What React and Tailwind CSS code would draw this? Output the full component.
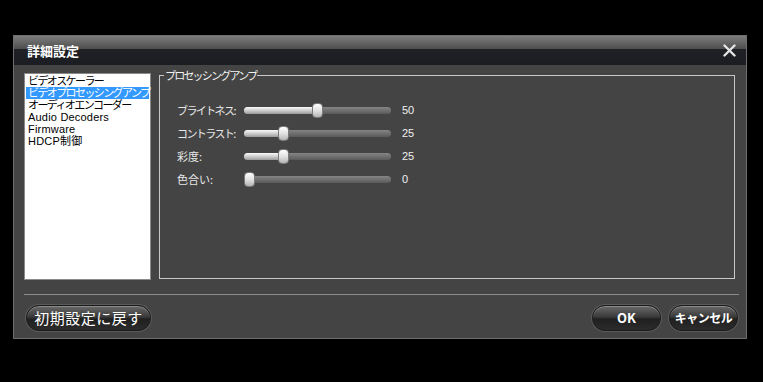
const jp = { fontFamily: '"Noto Sans CJK JP", "Liberation Sans", sans-serif' };

const items = [
  { label: 'ビデオスケーラー', jp: true },
  { label: 'ビデオプロセッシングアンプ', jp: true, selected: true },
  { label: 'オーディオエンコーダー', jp: true },
  { label: 'Audio Decoders' },
  { label: 'Firmware' },
  { label: 'HDCP制御' },
];

const sliders = [
  { label: 'ブライトネス:', value: 50, kana: true },
  { label: 'コントラスト:', value: 25, kana: true },
  { label: '彩度:', value: 25 },
  { label: '色合い:', value: 0 },
];

function Slider({ label, value, kana }) {
  const left = value * 1.36;
  return (
    <div className="flex items-center h-[23px]">
      <div
        className={`w-[67px] text-[11px] text-[#e8e8e8] leading-none whitespace-nowrap ${kana ? 'tracking-[-1.6px]' : 'tracking-[0px]'}`}
        style={jp}
      >
        {label}
      </div>
      <div className="relative w-[147px] h-[7px] rounded-full bg-[linear-gradient(to_bottom,#858585,#5a5a5a)]">
        <div
          className="absolute left-0 top-0 h-[7px] rounded-full bg-[linear-gradient(to_bottom,#fafafa,#c4c4c4_60%,#9a9a9a)]"
          style={{ width: left + 6 }}
        />
        <div
          className="absolute top-[-4px] w-[11px] h-[15px] rounded-[4px] border border-[#7a7a7a] bg-[linear-gradient(to_bottom,#ffffff,#e2e2e2_50%,#b5b5b5)]"
          style={{ left }}
        />
      </div>
      <div className="ml-[11px] text-[11px] text-[#f0f0f0] leading-none" style={{ fontFamily: '"Liberation Sans", sans-serif' }}>
        {value}
      </div>
    </div>
  );
}

function PillButton({ children, className = '', textClass = '' }) {
  return (
    <button
      className={`h-[26px] rounded-full border border-[#1a1a1a] bg-[linear-gradient(to_bottom,#6a6a6a,#3a3a3a_45%,#202020_55%,#2c2c2c)] shadow-[inset_0_1px_0_#8a8a8a,0_0_0_1px_#5a5a5a] text-white flex items-center justify-center ${className}`}
    >
      <span className={textClass} style={jp}>{children}</span>
    </button>
  );
}

export default function App() {
  return (
    <div className="w-[763px] h-[382px] bg-black pt-[35px] pl-[13px]">
      <div className="w-[734px] h-[304px] border border-[#6e6e6e] bg-[#444444] flex flex-col">
        <div className="h-[29px] flex items-center justify-between pl-[13px] pr-[10px] bg-[linear-gradient(to_bottom,#7c7c7c_0px,#4e4e4e_13px,#1f2127_13px,#1b1d23_29px)]">
          <span className="text-[13px] font-bold text-white" style={jp}>詳細設定</span>
          <svg width="13" height="13" viewBox="0 0 13 13">
            <path d="M1.5 1.5 L11.5 11.5 M11.5 1.5 L1.5 11.5" stroke="#e4e4e4" strokeWidth="2.4" strokeLinecap="round" />
          </svg>
        </div>

        <div className="flex pl-[10px] pt-[8px]">
          <div className="w-[127px] h-[207px] bg-white border border-[#8a8a8a] pt-[1px] px-[1px]">
            {items.map((it) => (
              <div
                key={it.label}
                className={`h-[12px] pl-[2px] leading-[12px] text-[11px] whitespace-nowrap ${
                  it.selected ? 'bg-[#3399ff] text-white' : 'text-black'
                } ${it.jp ? 'tracking-[-1.6px]' : 'tracking-[0.2px]'}`}
                style={{ fontFamily: '"Liberation Sans", "Noto Sans CJK JP", sans-serif' }}
              >
                {it.label}
              </div>
            ))}
          </div>

          <div className="relative ml-[8px] mt-[2px] w-[576px] h-[204px] border border-[#c8c8c8] pl-[17px] pt-[23px]">
            <span
              className="absolute left-[4px] top-[-8px] bg-[#444444] px-[1px] text-[11px] leading-[14px] tracking-[-1.8px] text-[#f2f2f2]"
              style={jp}
            >
              プロセッシングアンプ
            </span>
            {sliders.map((s) => (
              <Slider key={s.label} {...s} />
            ))}
          </div>
        </div>

        <div className="ml-[10px] mr-[7px] mt-[14px] h-px bg-[#8c8c8c]" />

        <div className="flex items-center justify-between pl-[12px] pr-[8px] mt-[10px]">
          <PillButton className="w-[125px]" textClass="text-[15px] tracking-[0.5px]">初期設定に戻す</PillButton>
          <div className="flex gap-[8px]">
            <PillButton className="w-[69px]" textClass="text-[13px] font-bold">OK</PillButton>
            <PillButton className="w-[69px]" textClass="text-[12px] tracking-[-0.5px] font-bold">キャンセル</PillButton>
          </div>
        </div>
      </div>
    </div>
  );
}
